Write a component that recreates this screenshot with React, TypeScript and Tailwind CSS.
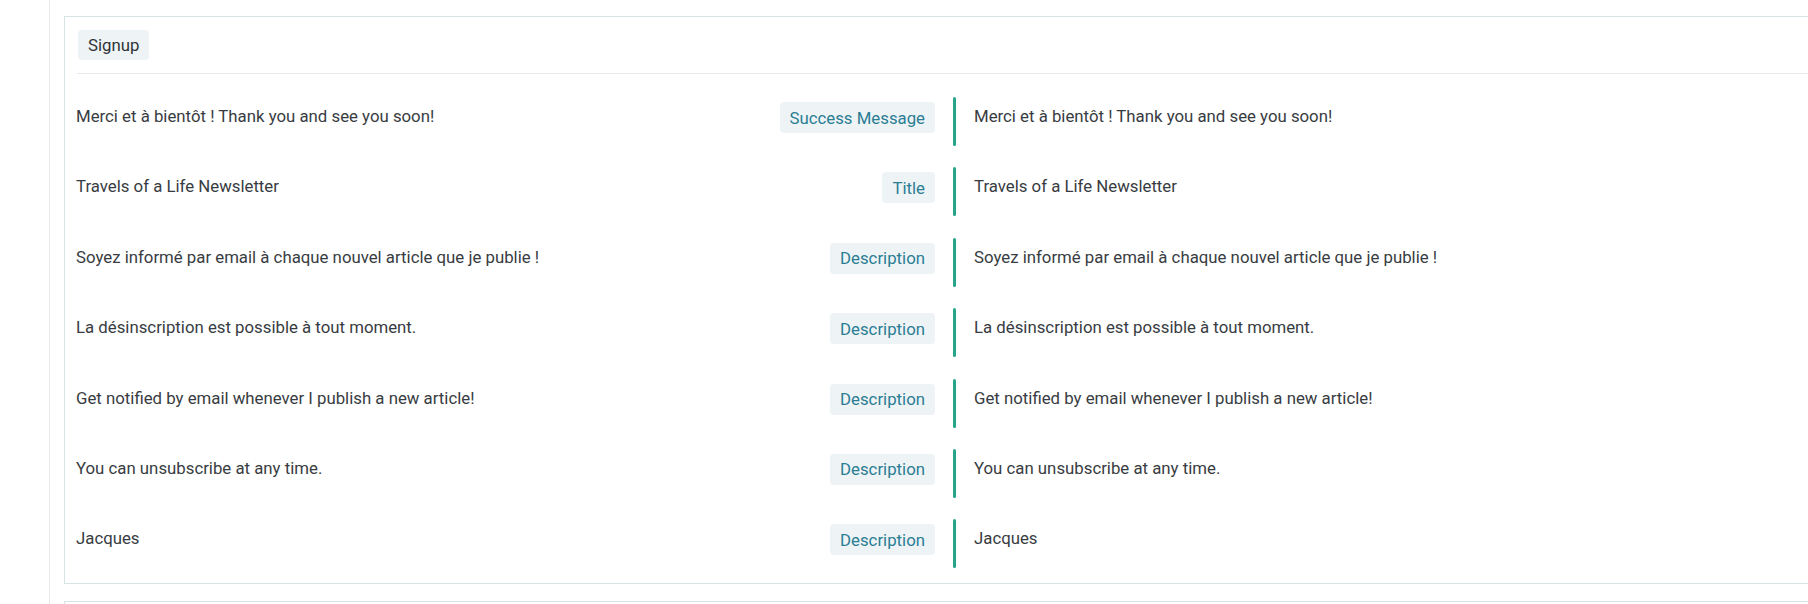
const rows: { source: string; kind: string }[] = [
  { source: "Merci et à bientôt ! Thank you and see you soon!", kind: "Success Message" },
  { source: "Travels of a Life Newsletter", kind: "Title" },
  { source: "Soyez informé par email à chaque nouvel article que je publie !", kind: "Description" },
  { source: "La désinscription est possible à tout moment.", kind: "Description" },
  { source: "Get notified by email whenever I publish a new article!", kind: "Description" },
  { source: "You can unsubscribe at any time.", kind: "Description" },
  { source: "Jacques", kind: "Description" },
];

export default function App() {
  return (
    <div className="h-[604px] w-full overflow-hidden bg-white font-['Roboto',sans-serif] text-[16.8px] text-[#383c42]">
      <div className="ml-[49px] h-full border-l border-[#e6e9eb] pl-[14px] pt-[16px]">
        {/* section card */}
        <div className="h-[568px] overflow-hidden border border-r-0 border-[#d8e3e6]">
          {/* header */}
          <div className="pl-[13px] pt-[13px]">
            <span className="inline-block rounded-[4px] bg-[#eef3f5] px-[10px] py-[3px] leading-[24px] text-[#2f3338]">
              Signup
            </span>
          </div>
          <div className="ml-[12px] mt-[13px] border-t border-[#e6eaec]" />

          {/* rows */}
          <div className="pt-[17px]">
            {rows.map((r, i) => (
              <div key={i} className="flex h-[70.4px] items-start pl-[11px]">
                <div className="flex w-[859px] items-start justify-between">
                  <span className="mt-[13px] leading-[24px]">{r.source}</span>
                  <span className="mt-[11px] rounded-[4px] bg-[#eef4f6] px-[10px] py-[3.5px] leading-[24px] text-[#2b7d94]">
                    {r.kind}
                  </span>
                </div>
                <div className="ml-[18px] mt-[6px] h-[49px] w-[3px] rounded-full bg-[#27a58b]" />
                <span className="ml-[18px] mt-[13px] leading-[24px]">{r.source}</span>
              </div>
            ))}
          </div>
        </div>

        {/* next card, cut off */}
        <div className="mt-[17px] h-[40px] border border-r-0 border-[#d8e3e6]" />
      </div>
    </div>
  );
}
